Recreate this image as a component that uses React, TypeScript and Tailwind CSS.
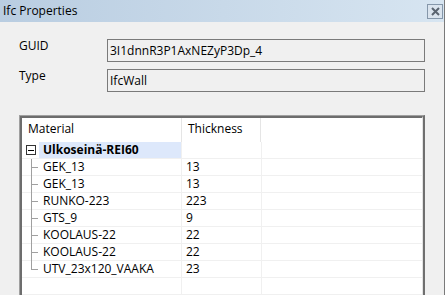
import React from "react";

const font = { fontFamily: '"Open Sans", "Liberation Sans", sans-serif' };

const rows: [string, string][] = [
  ["GEK_13", "13"],
  ["GEK_13", "13"],
  ["RUNKO-223", "223"],
  ["GTS_9", "9"],
  ["KOOLAUS-22", "22"],
  ["KOOLAUS-22", "22"],
  ["UTV_23x120_VAAKA", "23"],
];

export default function App() {
  return (
    <div
      className="w-[445px] h-[295px] overflow-hidden bg-[#f0f0f0] border-r border-[#7a7a7a] text-[12px] text-black"
      style={font}
    >
      {/* Title bar */}
      <div className="h-[22px] flex items-center justify-between pl-[3px] pr-[1px] bg-gradient-to-r from-[#b9cde1] to-[#d7e5f1]">
        <span className="text-[12px] leading-none">Ifc Properties</span>
        <div className="w-[16px] h-[15px] border border-[#8597aa] bg-[#dae4ee] flex items-center justify-center">
          <svg width="9" height="9" viewBox="0 0 9 9">
            <path d="M1 1 L8 8 M8 1 L1 8" stroke="#5a6470" strokeWidth="2" />
          </svg>
        </div>
      </div>

      {/* Body */}
      <div className="pl-[19px] pr-[19px] pt-[17px]">
        <div className="flex items-start h-[23px]">
          <span className="w-[88px] leading-[14px]">GUID</span>
          <div className="flex-1 h-[23px] border border-[#7a7a7a] bg-[#f0f0f0] flex items-center pl-[2px]">
            3I1dnnR3P1AxNEZyP3Dp_4
          </div>
        </div>
        <div className="flex items-start h-[23px] mt-[7px]">
          <span className="w-[88px] leading-[14px]">Type</span>
          <div className="flex-1 h-[23px] border border-[#7a7a7a] bg-[#f0f0f0] flex items-center pl-[2px]">
            IfcWall
          </div>
        </div>

        {/* Panel */}
        <div className="mt-[23px] h-[200px] border-t border-l border-[#a0a0a0] border-r-2 border-r-[#6f6f6f]">
          <div className="h-full border-t-2 border-l-2 border-t-[#6d6d6d] border-l-[#6d6d6d] border-r border-r-[#e3e3e3] bg-white">
            {/* header */}
            <div className="flex h-[24px]">
              <div className="w-[160px] flex items-center pl-[6px] pb-[2px] border-r border-[#e5e5e5]">
                Material
              </div>
              <div className="w-[79px] flex items-center pl-[6px] pb-[2px] border-r border-[#e5e5e5]">
                Thickness
              </div>
              <div className="flex-1" />
            </div>
            {/* group row */}
            <div className="flex h-[17px] border-b border-[#f0f0f0]">
              <div className="w-[160px] flex items-center border-r border-[#f0f0f0]">
                <div className="w-[17px] flex items-center justify-center pl-[1px]">
                  <div className="w-[10px] h-[10px] border border-[#333] flex items-center justify-center">
                    <div className="w-[6px] h-[1px] bg-black" />
                  </div>
                </div>
                <div className="flex-1 h-full bg-[#dde8fb] flex items-center pl-[4px] font-bold">
                  Ulkoseinä-REI60
                </div>
              </div>
              <div className="w-[80px] border-r border-[#f0f0f0]" />
              <div className="flex-1" />
            </div>
            {rows.map(([m, t], i) => (
              <div key={i} className="flex h-[17px] border-b border-[#f0f0f0]">
                <div className="w-[160px] flex items-center border-r border-[#f0f0f0]">
                  <div className="w-[21px] h-full relative">
                    <div
                      className={
                        i === rows.length - 1
                          ? "absolute left-[9px] top-0 h-[8px] w-px bg-[#a0a0a0]"
                          : "absolute left-[9px] top-0 h-[17px] w-px bg-[#a0a0a0]"
                      }
                    />
                    <div className="absolute left-[9px] top-[8px] w-[7px] h-px bg-[#a0a0a0]" />
                  </div>
                  <span>{m}</span>
                </div>
                <div className="w-[80px] flex items-center pl-[4px] border-r border-[#f0f0f0]">{t}</div>
                <div className="flex-1" />
              </div>
            ))}
            <div className="flex h-[17px] border-b border-[#f0f0f0]">
              <div className="w-[160px] border-r border-[#f0f0f0]" />
              <div className="w-[80px] border-r border-[#f0f0f0]" />
              <div className="flex-1" />
            </div>
          </div>
        </div>
      </div>
    </div>
  );
}
